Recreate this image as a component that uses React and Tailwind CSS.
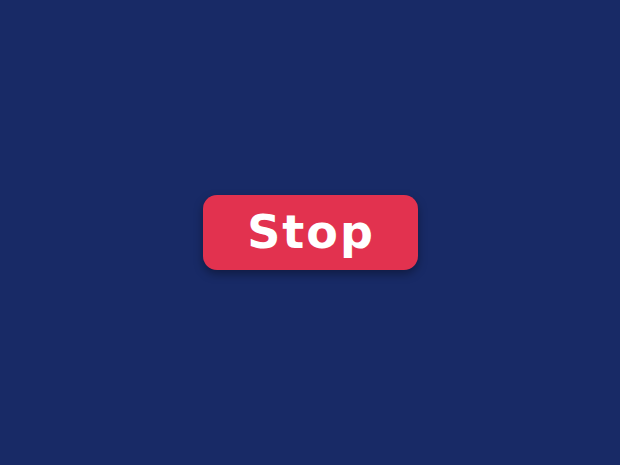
export default function App() {
  return (
    <div className="flex h-[465px] w-[620px] items-center justify-center bg-[#182a66]">
      <button className="flex h-[75px] w-[215px] items-center justify-center rounded-[14px] bg-[#e2324f] pl-[2px] text-[46px] font-bold tracking-[2px] text-white shadow-[0_4px_10px_rgba(0,0,0,0.35)] [font-family:'DejaVu_Sans',sans-serif]">
        Stop
      </button>
    </div>
  );
}
